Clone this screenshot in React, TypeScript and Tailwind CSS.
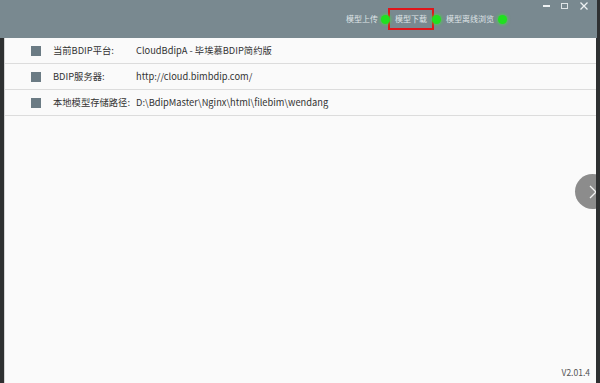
import React from "react";

const font = { fontFamily: '"Microsoft YaHei", "Noto Sans CJK SC", "Noto Sans", sans-serif' };

function Dot() {
  return (
    <span className="relative z-10 block w-[9px] h-[9px] rounded-full bg-[#1fe01f] shadow-[0_0_3px_1px_rgba(60,230,60,0.6)]" />
  );
}

const rows = [
  { label: "当前BDIP平台:", value: "CloudBdipA - 毕埃慕BDIP简约版" },
  { label: "BDIP服务器:", value: "http://cloud.bimbdip.com/" },
  { label: "本地模型存储路径:", value: "D:\\BdipMaster\\Nginx\\html\\filebim\\wendang" },
];

export default function App() {
  return (
    <div className="w-[600px] h-[383px] bg-[#2e3031] flex flex-col overflow-hidden" style={font}>
      <div className="h-[38px] w-[597px] bg-[#798990] flex items-start shrink-0">
        <div className="flex-1" />
        <div className="flex items-center mt-[8px] h-[22px] text-[8px] text-[#dfe4e6]">
          <span>模型上传</span>
          <span className="ml-[3px]"><Dot /></span>
          <span className="ml-[-2px] h-[22px] w-[46px] border-2 border-[#e0161b] flex items-center justify-center">模型下载</span>
          <span className="ml-[-2px]"><Dot /></span>
          <span className="ml-[5px]">模型离线浏览</span>
          <span className="ml-[4px]"><Dot /></span>
        </div>
        <div className="flex items-center mt-[0px] ml-[36px] mr-[9px] h-[11px]">
          <span className="block w-[7px] h-[2px] bg-[#eef1f2]" />
          <span className="block w-[7px] h-[6px] border border-[#dfe4e6] ml-[11px]" />
          <svg width="8" height="8" viewBox="0 0 8 8" className="ml-[12px]">
            <path d="M0.5 0.5L7.5 7.5M7.5 0.5L0.5 7.5" stroke="#eef1f2" strokeWidth="1.3" />
          </svg>
        </div>
      </div>
      <div className="flex-1 flex">
        <div className="w-[4px] bg-[#2e3031]" />
        <div className="w-[592px] bg-[#fafafa] border-l border-[#d4d4d4] relative overflow-hidden">
          {rows.map((r) => (
            <div
              key={r.label}
              className="h-[26px] flex items-center border-b border-[#dcdcdc] text-[9.3px] text-[#333]"
            >
              <span className="ml-[26px] w-[10px] h-[10px] bg-[#6b7b84]" />
              <span className="ml-[12px] w-[83px]">{r.label}</span>
              <span>{r.value}</span>
            </div>
          ))}
          <div className="absolute left-[570px] top-[136px] w-[35px] h-[35px] rounded-full bg-[#8c8c8c] flex items-center pl-[14px]">
            <svg width="8" height="14" viewBox="0 0 8 14">
              <path d="M1 1L7 7L1 13" stroke="#f4f4f4" strokeWidth="1.3" fill="none" />
            </svg>
          </div>
          <div className="absolute right-[6px] bottom-[4px] text-[8.5px] text-[#555]">V2.01.4</div>
        </div>
      </div>
    </div>
  );
}
